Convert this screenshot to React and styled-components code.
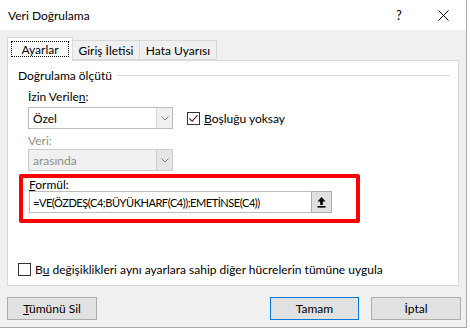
import React from 'react';
import styled, { createGlobalStyle } from 'styled-components';

const GlobalStyle = createGlobalStyle`
  html, body {
    margin: 0;
    padding: 0;
    background: #ffffff;
  }
  body {
    font-family: Lato, 'Liberation Sans', sans-serif;
    font-size: 12px;
    color: #000;
  }
`;

const Window = styled.div`
  width: 467px;
  height: 328px;
  box-sizing: border-box;
  background: #f0f0f0;
  border-right: 1px solid #a9a9a9;
  border-bottom: 1px solid #a9a9a9;
  display: flex;
  flex-direction: column;
`;

const TitleBar = styled.div`
  height: 30px;
  background: #ffffff;
  display: flex;
  align-items: center;
  padding-left: 8px;
`;

const Title = styled.span`
  flex: 1;
`;

const TitleButton = styled.div`
  width: ${p => p.$w || 46}px;
  height: 30px;
  display: flex;
  align-items: center;
  justify-content: center;
  font-size: 13px;
`;

const Body = styled.div`
  padding: 7px 7px 0 7px;
  display: flex;
  flex-direction: column;
`;

const TabRow = styled.div`
  display: flex;
  align-items: flex-end;
  height: 23px;
  position: relative;
  z-index: 1;
`;

const Tab = styled.div`
  box-sizing: border-box;
  width: ${p => p.$w}px;
  height: ${p => (p.$active ? 24 : 20)}px;
  margin-bottom: ${p => (p.$active ? -1 : 0)}px;
  margin-left: ${p => (p.$first ? 0 : -1)}px;
  background: ${p => (p.$active ? '#ffffff' : '#f0f0f0')};
  border: 1px solid #d9d9d9;
  border-bottom: ${p => (p.$active ? 'none' : '1px solid #d9d9d9')};
  display: flex;
  align-items: center;
  justify-content: center;
  padding: ${p => (p.$active ? '3px 3px 4px' : '0')};
`;

const FocusRect = styled.div`
  flex: 1;
  align-self: stretch;
  border: 1px dotted #000;
  display: flex;
  align-items: center;
  justify-content: center;
`;

const Panel = styled.div`
  box-sizing: border-box;
  height: 226px;
  background: #ffffff;
  border: 1px solid #d9d9d9;
  padding: 6px 8px 0 10px;
  display: flex;
  flex-direction: column;
`;

const Legend = styled.div`
  display: flex;
  align-items: center;
  height: 16px;
`;

const LegendLine = styled.div`
  flex: 1;
  height: 1px;
  background: #dcdcdc;
  margin-left: 5px;
`;

const Group = styled.div`
  padding-left: 10px;
  display: flex;
  flex-direction: column;
`;

const Label = styled.div`
  height: ${p => p.$h || 16}px;
  line-height: ${p => p.$h || 16}px;
  margin-top: ${p => p.$mt || 0}px;
  color: ${p => (p.$disabled ? '#8d8d8d' : '#000')};
`;

const Row = styled.div`
  display: flex;
  align-items: center;
  margin-top: ${p => p.$mt || 0}px;
`;

const Select = styled.div`
  box-sizing: border-box;
  width: 145px;
  height: 22px;
  border: 1px solid ${p => (p.$disabled ? '#cccccc' : '#bcbcbc')};
  background: ${p => (p.$disabled ? '#f0f0f0' : '#ffffff')};
  color: ${p => (p.$disabled ? '#8d8d8d' : '#000')};
  display: flex;
  margin-top: ${p => p.$mt || 0}px;
`;

const SelectText = styled.div`
  flex: 1;
  padding-left: 4px;
  display: flex;
  align-items: center;
`;

const SelectArrow = styled.div`
  width: 15px;
  border-left: 1px solid ${p => (p.$disabled ? '#cccccc' : '#d4d4d4')};
  background: ${p => (p.$disabled ? '#e6e6e6' : '#f0f0f0')};
  display: flex;
  align-items: center;
  justify-content: center;
`;

const CheckLabel = styled.label`
  display: flex;
  align-items: center;
  margin-left: ${p => p.$ml || 0}px;
`;

const Box = styled.span`
  box-sizing: border-box;
  width: 13px;
  height: 13px;
  border: 1px solid #333333;
  background: #ffffff;
  display: inline-flex;
  align-items: center;
  justify-content: center;
  margin-right: 4px;
`;

const Highlight = styled.div`
  box-sizing: border-box;
  width: 341px;
  margin-left: -9px;
  margin-top: 3px;
  border: 4px solid #ff0000;
  border-radius: 2px;
  padding: 0 0 6px 6px;
  display: flex;
  flex-direction: column;
`;

const FormulaField = styled.div`
  box-sizing: border-box;
  width: 303px;
  height: 22px;
  border: 1px solid #bcbcbc;
  background: #ffffff;
  display: flex;
`;

const FormulaText = styled.div`
  flex: 1;
  padding-left: 3px;
  display: flex;
  align-items: center;
  white-space: nowrap;
  font-size: 11px;
  letter-spacing: -0.45px;
`;

const CollapseButton = styled.div`
  box-sizing: border-box;
  width: 21px;
  margin: -1px -1px -1px 0;
  border: 1px solid #adadad;
  background: #e1e1e1;
  display: flex;
  align-items: center;
  justify-content: center;
`;

const ButtonRow = styled.div`
  display: flex;
  margin-top: 11px;
  margin-right: -2px;
  gap: 12px;
`;

const Spacer = styled.div`
  flex: 1;
`;

const Button = styled.div`
  box-sizing: border-box;
  width: ${p => p.$w || 90}px;
  height: 23px;
  background: #e1e1e1;
  border: 1px solid ${p => (p.$default ? '#0078d7' : '#adadad')};
  display: flex;
  align-items: center;
  justify-content: center;
`;

const Chevron = () => (
  <svg width="8" height="5" viewBox="0 0 8 5">
    <path d="M0.5 0.5 L4 4 L7.5 0.5" fill="none" stroke="#7a7a7a" strokeWidth="1" />
  </svg>
);

export default function App() {
  return (
    <>
      <GlobalStyle />
      <Window>
        <TitleBar>
          <Title>Veri Doğrulama</Title>
          <TitleButton $w={42}>?</TitleButton>
          <TitleButton>
            <svg width="11" height="11" viewBox="0 0 11 11">
              <path d="M0.5 0.5 L10.5 10.5 M10.5 0.5 L0.5 10.5" stroke="#000" strokeWidth="1" />
            </svg>
          </TitleButton>
        </TitleBar>
        <Body>
          <TabRow>
            <Tab $w={66} $active $first>
              <FocusRect>Ayarlar</FocusRect>
            </Tab>
            <Tab $w={68}>Giriş İletisi</Tab>
            <Tab $w={78}>Hata Uyarısı</Tab>
          </TabRow>
          <Panel>
            <Legend>
              Doğrulama ölçütü
              <LegendLine />
            </Legend>
            <Group>
              <Label $mt={6}>İzin Verile<u>n</u>:</Label>
              <Row $mt={2}>
                <Select>
                  <SelectText>Özel</SelectText>
                  <SelectArrow><Chevron /></SelectArrow>
                </Select>
                <CheckLabel $ml={14}>
                  <Box>
                    <svg width="11" height="11" viewBox="0 0 11 11">
                      <path d="M1.5 5.5 L4.2 8.3 L9.5 2.2" fill="none" stroke="#222" strokeWidth="1.1" />
                    </svg>
                  </Box>
                  <span><u>B</u>oşluğu yoksay</span>
                </CheckLabel>
              </Row>
              <Label $h={14} $mt={5} $disabled>Veri:</Label>
              <Select $mt={1} $disabled>
                <SelectText>arasında</SelectText>
                <SelectArrow $disabled><Chevron /></SelectArrow>
              </Select>
              <Highlight>
                <Label $h={13}><u>F</u>ormül:</Label>
                <FormulaField>
                  <FormulaText>=VE(ÖZDEŞ(C4;BÜYÜKHARF(C4));EMETİNSE(C4))</FormulaText>
                  <CollapseButton>
                    <svg width="9" height="11" viewBox="0 0 9 11">
                      <path d="M4.5 0 L8.5 4.5 L5.8 4.5 L5.8 8 L3.2 8 L3.2 4.5 L0.5 4.5 Z" fill="#000" />
                      <rect x="0.5" y="9" width="8" height="1.6" fill="#000" />
                    </svg>
                  </CollapseButton>
                </FormulaField>
              </Highlight>
            </Group>
            <Row $mt={39}>
              <CheckLabel>
                <Box />
                <span>B<u>u</u> değişiklikleri aynı ayarlara sahip diğer hücrelerin tümüne uygula</span>
              </CheckLabel>
            </Row>
          </Panel>
          <ButtonRow>
            <Button><span><u>T</u>ümünü Sil</span></Button>
            <Spacer />
            <Button $w={89} $default>Tamam</Button>
            <Button>İptal</Button>
          </ButtonRow>
        </Body>
      </Window>
    </>
  );
}
